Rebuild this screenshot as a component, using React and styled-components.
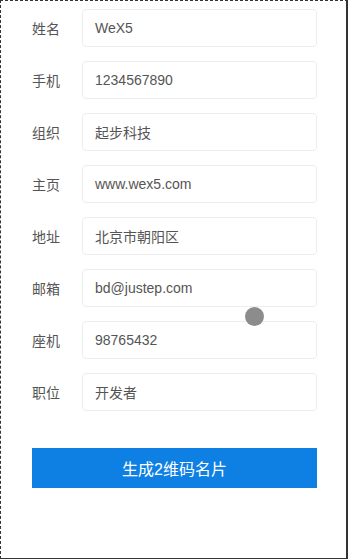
import React from "react";
import styled, { createGlobalStyle } from "styled-components";

const fields = [
  { label: "姓名", value: "WeX5" },
  { label: "手机", value: "1234567890" },
  { label: "组织", value: "起步科技" },
  { label: "主页", value: "www.wex5.com" },
  { label: "地址", value: "北京市朝阳区" },
  { label: "邮箱", value: "bd@justep.com" },
  { label: "座机", value: "98765432" },
  { label: "职位", value: "开发者" },
];

function App() {
  return (
    <>
      <GlobalStyle />
      <Frame>
        <Form>
          {fields.map((f) => (
            <Row key={f.label}>
              <Label>{f.label}</Label>
              <Field>{f.value}</Field>
            </Row>
          ))}
        </Form>
        <Button>生成2维码名片</Button>
        <Touch />
      </Frame>
    </>
  );
}

const GlobalStyle = createGlobalStyle`
  html, body {
    margin: 0;
    padding: 0;
    background: #fff;
  }
  body {
    font-family: "Liberation Sans", "Noto Sans CJK SC", sans-serif;
  }
`;

const Frame = styled.div`
  position: relative;
  box-sizing: border-box;
  width: 348px;
  height: 559px;
  border-top: 1px dashed #333;
  border-left: 1px dashed #333;
  border-right: 2px solid #333;
  border-bottom: 1px solid #333;
  padding: 8px 29px 0 31px;
  background: #fff;
`;

const Form = styled.div`
  display: flex;
  flex-direction: column;
  gap: 14px;
`;

const Row = styled.div`
  display: flex;
  align-items: center;
  height: 38px;
`;

const Label = styled.div`
  width: 50px;
  font-size: 14px;
  color: #555;
`;

const Field = styled.div`
  flex: 1;
  box-sizing: border-box;
  height: 38px;
  display: flex;
  align-items: center;
  padding-left: 12px;
  border: 1px solid #ededed;
  border-radius: 4px;
  font-size: 14px;
  color: #555;
`;

const Button = styled.div`
  margin-top: 37px;
  height: 40px;
  display: flex;
  align-items: center;
  justify-content: center;
  background: #0e80e4;
  color: #fff;
  font-size: 16px;
`;

const Touch = styled.div`
  position: absolute;
  left: 244px;
  top: 306px;
  width: 19px;
  height: 19px;
  border-radius: 50%;
  background: #8c8c8c;
`;

export default App;
